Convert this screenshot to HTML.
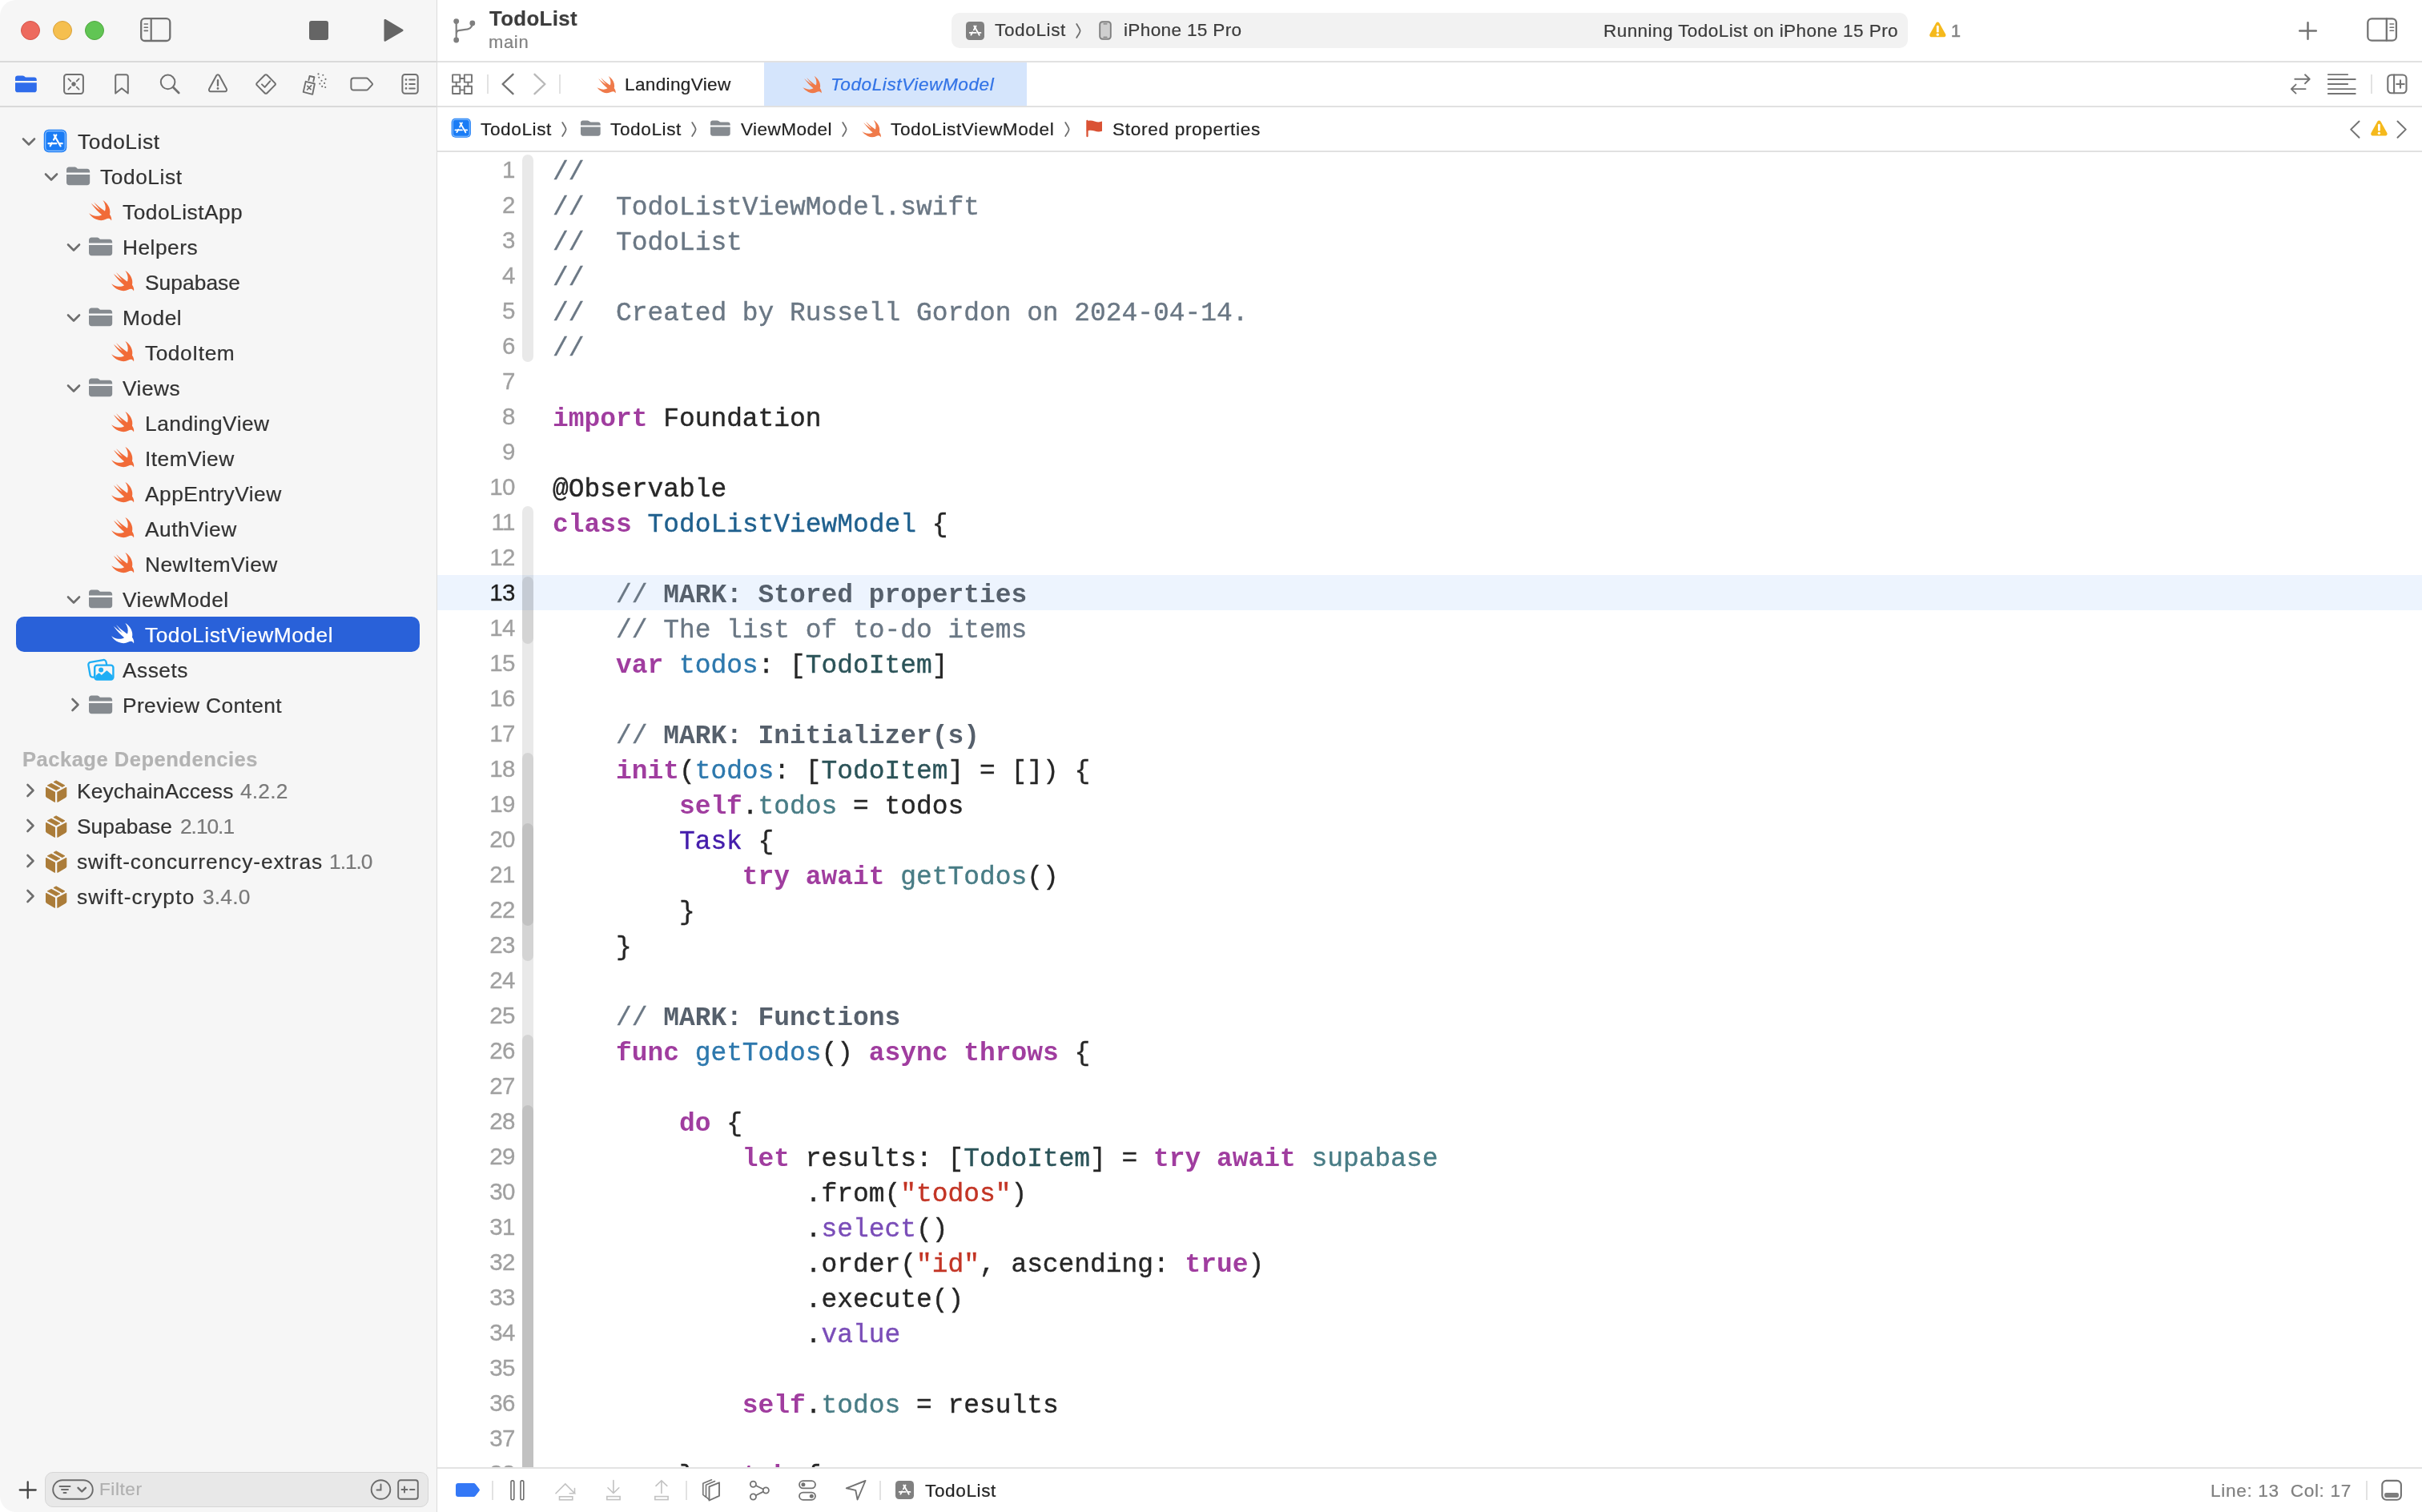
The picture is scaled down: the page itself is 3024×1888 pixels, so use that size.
<!DOCTYPE html>
<html lang="en"><head><meta charset="utf-8"><title>TodoList — TodoListViewModel.swift</title>
<style>
*{box-sizing:border-box;margin:0;padding:0}
html,body{width:3024px;height:1888px;overflow:hidden;background:#fff}
body{font-family:"Liberation Sans",sans-serif;color:#262626;-webkit-font-smoothing:antialiased}
#app{position:relative;width:3024px;height:1888px;overflow:hidden;background:#fff}
.abs,.ic,.t{position:absolute}
.ic{display:block;overflow:visible}
.t{white-space:pre;line-height:44px;height:44px}
/* sidebar */
#sidebar{border-radius:20px 0 0 20px;position:absolute;left:0;top:0;width:546px;height:1888px;background:#f6f6f6;border-right:1px solid #dcdcdc}
#sidebar .hline{background:#d9d9d9}
.hline{position:absolute;height:2px;background:#e1e1e1}
.row{position:absolute;left:0;width:545px;height:44px}
.lbl{position:absolute;font-size:26px;line-height:44px;top:0;color:#2b2b2b;white-space:pre}
.lbl .v{color:#767676}
#sel{position:absolute;left:20px;top:770px;width:504px;height:44px;border-radius:10px;background:#2961d9}
/* editor */
#editor{position:absolute;left:546px;top:0;width:2478px;height:1888px;background:#fff}
.code{position:absolute;left:144px;white-space:pre;font-family:"Liberation Mono",monospace;font-size:32.9px;line-height:44px;height:44px;color:#262626}
.ln{position:absolute;left:0;width:96.500px;text-align:right;font-size:29.5px;letter-spacing:-.8px;line-height:44px;height:44px;color:#a0a0a0}
.k{color:#a03d9f;font-weight:bold}
.c{color:#6a7784}
.m{color:#56606c;font-weight:bold}
.s{color:#c33424}
.td{color:#1f608e}
.od{color:#2d78ad}
.pc{color:#2b5358}
.pf{color:#487c85}
.sc{color:#431cab}
.sf{color:#7a4db8}
.t,.lbl,.code,.ln{will-change:transform}
.code{-webkit-text-stroke:.4px}
.code .k,.code .m{-webkit-text-stroke:0}
.ln{-webkit-text-stroke:.3px}
.t{-webkit-text-stroke:.22px}

</style></head>
<body>
<div id="app">
<div id="sidebar">
<div class="abs" style="left:26px;top:26px;width:24px;height:24px;border-radius:50%;background:#ed6a5e;border:1px solid #d5554a"></div>
<div class="abs" style="left:66px;top:26px;width:24px;height:24px;border-radius:50%;background:#f5bf4f;border:1px solid #d9a13b"></div>
<div class="abs" style="left:106px;top:26px;width:24px;height:24px;border-radius:50%;background:#61c554;border:1px solid #4fa73f"></div>
<svg class="ic" style="left:174.900px;top:21.800px" width="38.500" height="30.200" viewBox="0 0 38.500 30.200" fill="none" stroke="#707070"><rect x="1.200" y="1.200" width="36.100" height="27.800" rx="4.600" stroke-width="2.300"/><path d="M13.700 1.500v27.500" stroke-width="2.200"/><path d="M5.200 8h4.200M5.200 12.200h4.200M5.200 16.400h4.200" stroke-width="1.600" stroke-linecap="round"/></svg>
<div class="abs" style="left:386px;top:26px;width:24px;height:24px;border-radius:3px;background:#656565"></div>
<svg class="ic" style="left:476.500px;top:23px" width="28" height="30" viewBox="0 0 28 30"><path d="M2.500 2.200c0-1 1-1.600 1.900-1.100l21.500 12.600c.9.500.9 1.700 0 2.200L4.400 28.500c-.9.500-1.900-.1-1.900-1.100z" fill="#656565"/></svg>
<div class="hline" style="left:0;top:76px;width:545px"></div>
<div class="hline" style="left:0;top:132px;width:545px"></div>
<svg class="ic" style="left:18.7px;top:94.0px" width="26.8" height="21.8" viewBox="0 0 32 26"><path fill="#2f6ceb" d="M0 4.2C0 1.9 1.4 .5 3.7 .5h7.2c1.2 0 1.9.3 2.7 1l1 .9c.6.5 1.1.7 2 .7h11.7c2.3 0 3.7 1.4 3.7 3.7v1.5H0z"/><path fill="#2f6ceb" d="M0 10.900h32v10.900c0 2.3-1.4 3.7-3.7 3.7H3.7C1.4 25.500 0 24.100 0 21.800z"/></svg>
<svg class="ic" style="left:76.2px;top:88.9px" width="32" height="32" viewBox="0 0 32 32" fill="none" stroke="#707070" stroke-width="2" stroke-linecap="round" stroke-linejoin="round"><rect x="4.100" y="4.100" width="23.800" height="23.800" rx="3.200"/><path d="M9.400 9.400l2.900 2.900M22.600 9.400l-2.900 2.900M9.400 22.600l2.900-2.900M22.600 22.600l-2.900-2.900" stroke-width="1.800"/><circle cx="16" cy="16" r="2.700" fill="#707070" stroke="none"/></svg>
<svg class="ic" style="left:136.1px;top:88.9px" width="32" height="32" viewBox="0 0 32 32" fill="none" stroke="#707070" stroke-width="2" stroke-linecap="round" stroke-linejoin="round"><path d="M8.200 6.400a2.200 2.200 0 0 1 2.200-2.200h11.200a2.200 2.200 0 0 1 2.200 2.200V27.600L16 21.200 8.200 27.600z"/></svg>
<svg class="ic" style="left:195.8px;top:88.9px" width="32" height="32" viewBox="0 0 32 32" fill="none" stroke="#707070" stroke-width="2" stroke-linecap="round" stroke-linejoin="round"><circle cx="13.600" cy="13.400" r="8.800"/><path d="M20.200 20l7 7" stroke-width="2.800"/></svg>
<svg class="ic" style="left:256.0px;top:88.9px" width="32" height="32" viewBox="0 0 32 32" fill="none" stroke="#707070" stroke-width="2" stroke-linecap="round" stroke-linejoin="round"><path d="M16 4.200c.8 0 1.400.4 1.800 1.100l9 16.700c.8 1.500-.2 3.200-1.800 3.200H7c-1.600 0-2.600-1.700-1.800-3.200l9-16.700c.4-.7 1-1.100 1.800-1.100z"/><path d="M16 11.200v6.600" stroke-width="2.300"/><circle cx="16" cy="21.500" r="1.400" fill="#707070" stroke="none"/></svg>
<svg class="ic" style="left:316.0px;top:88.9px" width="32" height="32" viewBox="0 0 32 32" fill="none" stroke="#707070" stroke-width="2" stroke-linecap="round" stroke-linejoin="round"><path d="M14.600 4.800c.8-.8 2-.8 2.800 0l9.800 9.800c.8.8.8 2 0 2.800l-9.800 9.800c-.8.8-2 .8-2.800 0l-9.800-9.800c-.8-.8-.8-2 0-2.800z"/><path d="M11 16.400l3.600 3.500 6.600-7.600"/></svg>
<svg class="ic" style="left:376.5px;top:88.9px" width="32" height="32" viewBox="0 0 32 32" fill="none" stroke="#707070" stroke-width="1.9" stroke-linecap="round" stroke-linejoin="round"><path d="M4.700 12.800l11.200 2.700-2.700 13.300-11.500-2.900z"/><path d="M8.400 11l1.200-5 5.800 1.300-1.100 5.300" /><path d="M6.900 18.300l4.200 4.400M11.600 17.900l-5 5.100" stroke-width="1.700"/><g fill="#707070" stroke="none"><circle cx="21.300" cy="7.700" r="1.050"/><circle cx="26.300" cy="4.700" r="1.050"/><circle cx="29.500" cy="9.900" r="1.050"/><circle cx="24.500" cy="11.800" r="1.050"/><circle cx="28.100" cy="14.900" r="1.050"/><circle cx="25.200" cy="18.900" r="1.050"/><circle cx="29.200" cy="20" r="1.050"/><circle cx="22.300" cy="15.600" r="1.050"/><circle cx="20.500" cy="3.400" r="1.050"/></g></svg>
<svg class="ic" style="left:435.6px;top:88.9px" width="32" height="32" viewBox="0 0 32 32" fill="none" stroke="#707070" stroke-width="2" stroke-linecap="round" stroke-linejoin="round"><path d="M5.400 8.400h15.800c.9 0 1.600.3 2.200 1l5.300 5.800c.5.500.5 1.100 0 1.600l-5.300 5.800c-.6.700-1.300 1-2.200 1H5.400c-1.700 0-3-1.300-3-3V11.400c0-1.700 1.300-3 3-3z"/></svg>
<svg class="ic" style="left:496.0px;top:88.9px" width="32" height="32" viewBox="0 0 32 32" fill="none" stroke="#707070" stroke-width="2" stroke-linecap="round" stroke-linejoin="round"><rect x="6.400" y="4.100" width="19.300" height="23.700" rx="3.200"/><path d="M15.200 10.600h6.600M15.200 16h6.600M15.200 21.400h6.600"/><g fill="#707070" stroke="none"><circle cx="11" cy="10.600" r="1.300"/><circle cx="11" cy="16" r="1.300"/><circle cx="11" cy="21.400" r="1.300"/></g></svg>
<div id="sel"></div>
<svg class="ic" style="left:27px;top:170.8px" width="18" height="12" viewBox="0 0 18 12"><path d="M2 2.5l7 7 7-7" fill="none" stroke="#6e6e6e" stroke-width="2.6" stroke-linecap="round" stroke-linejoin="round"/></svg>
<svg class="ic" style="left:54px;top:161.0px" width="30" height="30" viewBox="0 0 40 40"><rect x="1" y="1" width="38" height="38" rx="8" fill="#1a7cf5"/><rect x="3.6" y="3.600" width="32.8" height="32.8" rx="5.5" fill="none" stroke="#8ec2ff" stroke-width="1.6"/><g stroke="#fff" stroke-width="2.900" stroke-linecap="round" fill="none"><path d="M21.800 10L17.400 18M14.500 23.200L11.600 28.400"/><path d="M18 10l10.800 18.600"/><path d="M8.600 24.200h13.200M27.600 24.200h4"/></g></svg>
<div class="t" style="left:96.50px;top:155px;font-size:26.3px;color:#333333;;letter-spacing:0.581px">TodoList</div>
<svg class="ic" style="left:55.10000000000001px;top:214.8px" width="18" height="12" viewBox="0 0 18 12"><path d="M2 2.5l7 7 7-7" fill="none" stroke="#6e6e6e" stroke-width="2.6" stroke-linecap="round" stroke-linejoin="round"/></svg>
<svg class="ic" style="left:82.9px;top:208.2px" width="29.2" height="23.7" viewBox="0 0 32 26"><path fill="#868b90" d="M0 4.2C0 1.9 1.4 .5 3.7 .5h7.2c1.2 0 1.9.3 2.7 1l1 .9c.6.5 1.1.7 2 .7h11.7c2.3 0 3.7 1.4 3.7 3.7v1.5H0z"/><path fill="#868b90" d="M0 10.900h32v10.900c0 2.3-1.4 3.7-3.7 3.7H3.7C1.4 25.500 0 24.100 0 21.800z"/></svg>
<div class="t" style="left:124.50px;top:199px;font-size:26.3px;color:#333333;;letter-spacing:0.581px">TodoList</div>
<svg class="ic " style="left:111.2px;top:250.4px" width="28.6" height="25.8" viewBox="2.35 3.35 18.4 16.6"><path fill="#f16b38" d="M13.543 3.41c4.114 2.47 6.545 7.162 5.549 11.131-.024.093-.05.181-.076.272l.002.001c2.062 2.538 1.5 5.258 1.236 4.745-1.072-2.086-3.066-1.568-4.088-1.043a6.803 6.803 0 0 1-.281.158l-.02.012-.002.002c-2.115 1.123-4.957 1.205-7.812-.022a12.568 12.568 0 0 1-5.64-4.838c.649.48 1.35.902 2.097 1.252 3.019 1.414 6.051 1.311 8.197-.002C9.651 12.73 7.101 9.67 5.146 7.191a10.628 10.628 0 0 1-1.005-1.384c2.34 2.142 6.038 4.83 7.365 5.576C8.69 8.408 6.208 4.743 6.324 4.86c4.436 4.47 8.528 6.996 8.528 6.996.154.085.27.154.36.213.085-.215.16-.437.224-.668.708-2.588-.09-5.548-1.893-7.992z"/></svg>
<div class="t" style="left:152.50px;top:243px;font-size:26.3px;color:#333333;letter-spacing:.5px">TodoListApp</div>
<svg class="ic" style="left:83.30000000000001px;top:302.8px" width="18" height="12" viewBox="0 0 18 12"><path d="M2 2.5l7 7 7-7" fill="none" stroke="#6e6e6e" stroke-width="2.6" stroke-linecap="round" stroke-linejoin="round"/></svg>
<svg class="ic" style="left:111.10000000000001px;top:296.2px" width="29.2" height="23.7" viewBox="0 0 32 26"><path fill="#868b90" d="M0 4.2C0 1.9 1.4 .5 3.7 .5h7.2c1.2 0 1.9.3 2.7 1l1 .9c.6.5 1.1.7 2 .7h11.7c2.3 0 3.7 1.4 3.7 3.7v1.5H0z"/><path fill="#868b90" d="M0 10.900h32v10.900c0 2.3-1.4 3.7-3.7 3.7H3.7C1.4 25.500 0 24.100 0 21.800z"/></svg>
<div class="t" style="left:152.50px;top:287px;font-size:26.3px;color:#333333;letter-spacing:.5px">Helpers</div>
<svg class="ic " style="left:139.2px;top:338.4px" width="28.6" height="25.8" viewBox="2.35 3.35 18.4 16.6"><path fill="#f16b38" d="M13.543 3.41c4.114 2.47 6.545 7.162 5.549 11.131-.024.093-.05.181-.076.272l.002.001c2.062 2.538 1.5 5.258 1.236 4.745-1.072-2.086-3.066-1.568-4.088-1.043a6.803 6.803 0 0 1-.281.158l-.02.012-.002.002c-2.115 1.123-4.957 1.205-7.812-.022a12.568 12.568 0 0 1-5.64-4.838c.649.48 1.35.902 2.097 1.252 3.019 1.414 6.051 1.311 8.197-.002C9.651 12.73 7.101 9.67 5.146 7.191a10.628 10.628 0 0 1-1.005-1.384c2.34 2.142 6.038 4.83 7.365 5.576C8.69 8.408 6.208 4.743 6.324 4.86c4.436 4.47 8.528 6.996 8.528 6.996.154.085.27.154.36.213.085-.215.16-.437.224-.668.708-2.588-.09-5.548-1.893-7.992z"/></svg>
<div class="t" style="left:180.50px;top:331px;font-size:26.3px;color:#333333;;letter-spacing:0.068px">Supabase</div>
<svg class="ic" style="left:83.30000000000001px;top:390.8px" width="18" height="12" viewBox="0 0 18 12"><path d="M2 2.5l7 7 7-7" fill="none" stroke="#6e6e6e" stroke-width="2.6" stroke-linecap="round" stroke-linejoin="round"/></svg>
<svg class="ic" style="left:111.10000000000001px;top:384.2px" width="29.2" height="23.7" viewBox="0 0 32 26"><path fill="#868b90" d="M0 4.2C0 1.9 1.4 .5 3.7 .5h7.2c1.2 0 1.9.3 2.7 1l1 .9c.6.5 1.1.7 2 .7h11.7c2.3 0 3.7 1.4 3.7 3.7v1.5H0z"/><path fill="#868b90" d="M0 10.900h32v10.900c0 2.3-1.4 3.7-3.7 3.7H3.7C1.4 25.500 0 24.100 0 21.800z"/></svg>
<div class="t" style="left:152.50px;top:375px;font-size:26.3px;color:#333333;letter-spacing:.5px">Model</div>
<svg class="ic " style="left:139.2px;top:426.4px" width="28.6" height="25.8" viewBox="2.35 3.35 18.4 16.6"><path fill="#f16b38" d="M13.543 3.41c4.114 2.47 6.545 7.162 5.549 11.131-.024.093-.05.181-.076.272l.002.001c2.062 2.538 1.5 5.258 1.236 4.745-1.072-2.086-3.066-1.568-4.088-1.043a6.803 6.803 0 0 1-.281.158l-.02.012-.002.002c-2.115 1.123-4.957 1.205-7.812-.022a12.568 12.568 0 0 1-5.64-4.838c.649.48 1.35.902 2.097 1.252 3.019 1.414 6.051 1.311 8.197-.002C9.651 12.73 7.101 9.67 5.146 7.191a10.628 10.628 0 0 1-1.005-1.384c2.34 2.142 6.038 4.83 7.365 5.576C8.69 8.408 6.208 4.743 6.324 4.86c4.436 4.47 8.528 6.996 8.528 6.996.154.085.27.154.36.213.085-.215.16-.437.224-.668.708-2.588-.09-5.548-1.893-7.992z"/></svg>
<div class="t" style="left:180.50px;top:419px;font-size:26.3px;color:#333333;letter-spacing:.5px">TodoItem</div>
<svg class="ic" style="left:83.30000000000001px;top:478.8px" width="18" height="12" viewBox="0 0 18 12"><path d="M2 2.5l7 7 7-7" fill="none" stroke="#6e6e6e" stroke-width="2.6" stroke-linecap="round" stroke-linejoin="round"/></svg>
<svg class="ic" style="left:111.10000000000001px;top:472.2px" width="29.2" height="23.7" viewBox="0 0 32 26"><path fill="#868b90" d="M0 4.2C0 1.9 1.4 .5 3.7 .5h7.2c1.2 0 1.9.3 2.7 1l1 .9c.6.5 1.1.7 2 .7h11.7c2.3 0 3.7 1.4 3.7 3.7v1.5H0z"/><path fill="#868b90" d="M0 10.900h32v10.900c0 2.3-1.4 3.7-3.7 3.7H3.7C1.4 25.500 0 24.100 0 21.800z"/></svg>
<div class="t" style="left:152.50px;top:463px;font-size:26.3px;color:#333333;letter-spacing:.5px">Views</div>
<svg class="ic " style="left:139.2px;top:514.4px" width="28.6" height="25.8" viewBox="2.35 3.35 18.4 16.6"><path fill="#f16b38" d="M13.543 3.41c4.114 2.47 6.545 7.162 5.549 11.131-.024.093-.05.181-.076.272l.002.001c2.062 2.538 1.5 5.258 1.236 4.745-1.072-2.086-3.066-1.568-4.088-1.043a6.803 6.803 0 0 1-.281.158l-.02.012-.002.002c-2.115 1.123-4.957 1.205-7.812-.022a12.568 12.568 0 0 1-5.64-4.838c.649.48 1.35.902 2.097 1.252 3.019 1.414 6.051 1.311 8.197-.002C9.651 12.73 7.101 9.67 5.146 7.191a10.628 10.628 0 0 1-1.005-1.384c2.34 2.142 6.038 4.83 7.365 5.576C8.69 8.408 6.208 4.743 6.324 4.86c4.436 4.47 8.528 6.996 8.528 6.996.154.085.27.154.36.213.085-.215.16-.437.224-.668.708-2.588-.09-5.548-1.893-7.992z"/></svg>
<div class="t" style="left:180.50px;top:507px;font-size:26.3px;color:#333333;letter-spacing:.5px">LandingView</div>
<svg class="ic " style="left:139.2px;top:558.4px" width="28.6" height="25.8" viewBox="2.35 3.35 18.4 16.6"><path fill="#f16b38" d="M13.543 3.41c4.114 2.47 6.545 7.162 5.549 11.131-.024.093-.05.181-.076.272l.002.001c2.062 2.538 1.5 5.258 1.236 4.745-1.072-2.086-3.066-1.568-4.088-1.043a6.803 6.803 0 0 1-.281.158l-.02.012-.002.002c-2.115 1.123-4.957 1.205-7.812-.022a12.568 12.568 0 0 1-5.64-4.838c.649.48 1.35.902 2.097 1.252 3.019 1.414 6.051 1.311 8.197-.002C9.651 12.73 7.101 9.67 5.146 7.191a10.628 10.628 0 0 1-1.005-1.384c2.34 2.142 6.038 4.83 7.365 5.576C8.69 8.408 6.208 4.743 6.324 4.86c4.436 4.47 8.528 6.996 8.528 6.996.154.085.27.154.36.213.085-.215.16-.437.224-.668.708-2.588-.09-5.548-1.893-7.992z"/></svg>
<div class="t" style="left:180.50px;top:551px;font-size:26.3px;color:#333333;letter-spacing:.5px">ItemView</div>
<svg class="ic " style="left:139.2px;top:602.4px" width="28.6" height="25.8" viewBox="2.35 3.35 18.4 16.6"><path fill="#f16b38" d="M13.543 3.41c4.114 2.47 6.545 7.162 5.549 11.131-.024.093-.05.181-.076.272l.002.001c2.062 2.538 1.5 5.258 1.236 4.745-1.072-2.086-3.066-1.568-4.088-1.043a6.803 6.803 0 0 1-.281.158l-.02.012-.002.002c-2.115 1.123-4.957 1.205-7.812-.022a12.568 12.568 0 0 1-5.64-4.838c.649.48 1.35.902 2.097 1.252 3.019 1.414 6.051 1.311 8.197-.002C9.651 12.73 7.101 9.67 5.146 7.191a10.628 10.628 0 0 1-1.005-1.384c2.34 2.142 6.038 4.83 7.365 5.576C8.69 8.408 6.208 4.743 6.324 4.86c4.436 4.47 8.528 6.996 8.528 6.996.154.085.27.154.36.213.085-.215.16-.437.224-.668.708-2.588-.09-5.548-1.893-7.992z"/></svg>
<div class="t" style="left:180.50px;top:595px;font-size:26.3px;color:#333333;letter-spacing:.5px">AppEntryView</div>
<svg class="ic " style="left:139.2px;top:646.4px" width="28.6" height="25.8" viewBox="2.35 3.35 18.4 16.6"><path fill="#f16b38" d="M13.543 3.41c4.114 2.47 6.545 7.162 5.549 11.131-.024.093-.05.181-.076.272l.002.001c2.062 2.538 1.5 5.258 1.236 4.745-1.072-2.086-3.066-1.568-4.088-1.043a6.803 6.803 0 0 1-.281.158l-.02.012-.002.002c-2.115 1.123-4.957 1.205-7.812-.022a12.568 12.568 0 0 1-5.64-4.838c.649.48 1.35.902 2.097 1.252 3.019 1.414 6.051 1.311 8.197-.002C9.651 12.73 7.101 9.67 5.146 7.191a10.628 10.628 0 0 1-1.005-1.384c2.34 2.142 6.038 4.83 7.365 5.576C8.69 8.408 6.208 4.743 6.324 4.86c4.436 4.47 8.528 6.996 8.528 6.996.154.085.27.154.36.213.085-.215.16-.437.224-.668.708-2.588-.09-5.548-1.893-7.992z"/></svg>
<div class="t" style="left:180.50px;top:639px;font-size:26.3px;color:#333333;letter-spacing:.5px">AuthView</div>
<svg class="ic " style="left:139.2px;top:690.4px" width="28.6" height="25.8" viewBox="2.35 3.35 18.4 16.6"><path fill="#f16b38" d="M13.543 3.41c4.114 2.47 6.545 7.162 5.549 11.131-.024.093-.05.181-.076.272l.002.001c2.062 2.538 1.5 5.258 1.236 4.745-1.072-2.086-3.066-1.568-4.088-1.043a6.803 6.803 0 0 1-.281.158l-.02.012-.002.002c-2.115 1.123-4.957 1.205-7.812-.022a12.568 12.568 0 0 1-5.64-4.838c.649.48 1.35.902 2.097 1.252 3.019 1.414 6.051 1.311 8.197-.002C9.651 12.73 7.101 9.67 5.146 7.191a10.628 10.628 0 0 1-1.005-1.384c2.34 2.142 6.038 4.83 7.365 5.576C8.69 8.408 6.208 4.743 6.324 4.86c4.436 4.47 8.528 6.996 8.528 6.996.154.085.27.154.36.213.085-.215.16-.437.224-.668.708-2.588-.09-5.548-1.893-7.992z"/></svg>
<div class="t" style="left:180.50px;top:683px;font-size:26.3px;color:#333333;letter-spacing:.5px">NewItemView</div>
<svg class="ic" style="left:83.30000000000001px;top:742.8px" width="18" height="12" viewBox="0 0 18 12"><path d="M2 2.5l7 7 7-7" fill="none" stroke="#6e6e6e" stroke-width="2.6" stroke-linecap="round" stroke-linejoin="round"/></svg>
<svg class="ic" style="left:111.10000000000001px;top:736.2px" width="29.2" height="23.7" viewBox="0 0 32 26"><path fill="#868b90" d="M0 4.2C0 1.9 1.4 .5 3.7 .5h7.2c1.2 0 1.9.3 2.7 1l1 .9c.6.5 1.1.7 2 .7h11.7c2.3 0 3.7 1.4 3.7 3.7v1.5H0z"/><path fill="#868b90" d="M0 10.900h32v10.900c0 2.3-1.4 3.7-3.7 3.7H3.7C1.4 25.500 0 24.100 0 21.800z"/></svg>
<div class="t" style="left:152.50px;top:727px;font-size:26.3px;color:#333333;letter-spacing:.5px">ViewModel</div>
<svg class="ic " style="left:139.2px;top:778.4px" width="28.6" height="25.8" viewBox="2.35 3.35 18.4 16.6"><path fill="#ffffff" d="M13.543 3.41c4.114 2.47 6.545 7.162 5.549 11.131-.024.093-.05.181-.076.272l.002.001c2.062 2.538 1.5 5.258 1.236 4.745-1.072-2.086-3.066-1.568-4.088-1.043a6.803 6.803 0 0 1-.281.158l-.02.012-.002.002c-2.115 1.123-4.957 1.205-7.812-.022a12.568 12.568 0 0 1-5.64-4.838c.649.48 1.35.902 2.097 1.252 3.019 1.414 6.051 1.311 8.197-.002C9.651 12.73 7.101 9.67 5.146 7.191a10.628 10.628 0 0 1-1.005-1.384c2.34 2.142 6.038 4.83 7.365 5.576C8.69 8.408 6.208 4.743 6.324 4.86c4.436 4.47 8.528 6.996 8.528 6.996.154.085.27.154.36.213.085-.215.16-.437.224-.668.708-2.588-.09-5.548-1.893-7.992z"/></svg>
<div class="t" style="left:180.50px;top:771px;font-size:26.3px;color:#fff;;letter-spacing:0.524px">TodoListViewModel</div>
<svg class="ic" style="left:108.6px;top:821.6px" width="34" height="28" viewBox="0 0 34 28"><rect x="2.300" y="3.300" width="22.500" height="19" rx="3.200" fill="none" stroke="#1eaef5" stroke-width="2.300" transform="rotate(-10 13.500 12.800)"/><rect x="9.200" y="8.600" width="23.200" height="18" rx="3" fill="#f6f6f6" stroke="#1eaef5" stroke-width="2.400"/><circle cx="17.100" cy="14.600" r="3" fill="#1eaef5"/><path d="M10.400 21.800l3.300-3c.6-.5 1.200-.5 1.800 0l2.300 2.100 5.500-5c.7-.6 1.400-.6 2.100 0l6.200 5.700v4.500h-21.200z" fill="#1eaef5"/></svg>
<div class="t" style="left:152.50px;top:815px;font-size:26.3px;color:#333333;letter-spacing:.5px">Assets</div>
<svg class="ic" style="left:88.20000000000002px;top:871.4px" width="12" height="18" viewBox="0 0 12 18"><path d="M2.5 2l7 7-7 7" fill="none" stroke="#6e6e6e" stroke-width="2.6" stroke-linecap="round" stroke-linejoin="round"/></svg>
<svg class="ic" style="left:111.10000000000001px;top:868.2px" width="29.2" height="23.7" viewBox="0 0 32 26"><path fill="#868b90" d="M0 4.2C0 1.9 1.4 .5 3.7 .5h7.2c1.2 0 1.9.3 2.7 1l1 .9c.6.5 1.1.7 2 .7h11.7c2.3 0 3.7 1.4 3.7 3.7v1.5H0z"/><path fill="#868b90" d="M0 10.900h32v10.900c0 2.3-1.4 3.7-3.7 3.7H3.7C1.4 25.500 0 24.100 0 21.800z"/></svg>
<div class="t" style="left:152.50px;top:859px;font-size:26.3px;color:#333333;;letter-spacing:0.403px">Preview Content</div>
<div class="t" style="left:27.80px;top:926px;font-size:25.5px;color:#b3b3b3;font-weight:bold;letter-spacing:0.526px">Package Dependencies</div>
<svg class="ic" style="left:32px;top:978.4px" width="12" height="18" viewBox="0 0 12 18"><path d="M2.5 2l7 7-7 7" fill="none" stroke="#6e6e6e" stroke-width="2.6" stroke-linecap="round" stroke-linejoin="round"/></svg>
<svg class="ic" style="left:56.9px;top:973.8px" width="26.300" height="28.300" viewBox="0 0 26.300 28.300" fill="#ab7c39" stroke="#ab7c39" stroke-width="1.200" stroke-linejoin="round"><path stroke-width=".8" d="M13.100 .800L9.900 2.600 20.700 8.700 23.900 6.800z"/><path stroke-width=".8" d="M7.100 4.300L2.200 6.800l10.900 5.800 4.800-2.500z"/><path d="M.600 9.500l10.800 5.800v11.900L1.700 21.500c-.7-.4-1.100-1-1.100-1.800z"/><path d="M25.700 9.500l-10.800 5.800v11.900l9.700-5.700c.7-.4 1.100-1 1.100-1.800z"/></svg>
<div class="t" style="left:96.00px;top:966px;font-size:26.3px;color:#333333;;letter-spacing:0.182px">KeychainAccess</div>
<div class="t" style="left:300.40px;top:966px;font-size:26.3px;color:#7a7a7a;;letter-spacing:0.200px">4.2.2</div>
<svg class="ic" style="left:32px;top:1022.4000000000001px" width="12" height="18" viewBox="0 0 12 18"><path d="M2.5 2l7 7-7 7" fill="none" stroke="#6e6e6e" stroke-width="2.6" stroke-linecap="round" stroke-linejoin="round"/></svg>
<svg class="ic" style="left:56.9px;top:1017.8px" width="26.300" height="28.300" viewBox="0 0 26.300 28.300" fill="#ab7c39" stroke="#ab7c39" stroke-width="1.200" stroke-linejoin="round"><path stroke-width=".8" d="M13.100 .800L9.900 2.600 20.700 8.700 23.900 6.800z"/><path stroke-width=".8" d="M7.100 4.300L2.200 6.800l10.900 5.800 4.800-2.500z"/><path d="M.600 9.500l10.800 5.800v11.900L1.700 21.500c-.7-.4-1.100-1-1.100-1.800z"/><path d="M25.700 9.500l-10.800 5.800v11.900l9.700-5.700c.7-.4 1.100-1 1.100-1.800z"/></svg>
<div class="t" style="left:96.00px;top:1010px;font-size:26.3px;color:#333333;;letter-spacing:0.068px">Supabase</div>
<div class="t" style="left:224.50px;top:1010px;font-size:26.3px;color:#7a7a7a;;letter-spacing:-1.021px">2.10.1</div>
<svg class="ic" style="left:32px;top:1066.4px" width="12" height="18" viewBox="0 0 12 18"><path d="M2.5 2l7 7-7 7" fill="none" stroke="#6e6e6e" stroke-width="2.6" stroke-linecap="round" stroke-linejoin="round"/></svg>
<svg class="ic" style="left:56.9px;top:1061.8px" width="26.300" height="28.300" viewBox="0 0 26.300 28.300" fill="#ab7c39" stroke="#ab7c39" stroke-width="1.200" stroke-linejoin="round"><path stroke-width=".8" d="M13.100 .800L9.900 2.600 20.700 8.700 23.900 6.800z"/><path stroke-width=".8" d="M7.100 4.300L2.200 6.800l10.900 5.800 4.800-2.500z"/><path d="M.600 9.500l10.800 5.800v11.900L1.700 21.500c-.7-.4-1.100-1-1.100-1.800z"/><path d="M25.700 9.500l-10.800 5.800v11.900l9.700-5.700c.7-.4 1.100-1 1.100-1.800z"/></svg>
<div class="t" style="left:96.00px;top:1054px;font-size:26.3px;color:#333333;;letter-spacing:0.919px">swift-concurrency-extras</div>
<div class="t" style="left:410.50px;top:1054px;font-size:26.3px;color:#7a7a7a;;letter-spacing:-1.000px">1.1.0</div>
<svg class="ic" style="left:32px;top:1110.4px" width="12" height="18" viewBox="0 0 12 18"><path d="M2.5 2l7 7-7 7" fill="none" stroke="#6e6e6e" stroke-width="2.6" stroke-linecap="round" stroke-linejoin="round"/></svg>
<svg class="ic" style="left:56.9px;top:1105.8px" width="26.300" height="28.300" viewBox="0 0 26.300 28.300" fill="#ab7c39" stroke="#ab7c39" stroke-width="1.200" stroke-linejoin="round"><path stroke-width=".8" d="M13.100 .800L9.900 2.600 20.700 8.700 23.900 6.800z"/><path stroke-width=".8" d="M7.100 4.300L2.200 6.800l10.900 5.800 4.800-2.500z"/><path d="M.600 9.500l10.800 5.800v11.900L1.700 21.500c-.7-.4-1.100-1-1.100-1.800z"/><path d="M25.700 9.500l-10.800 5.800v11.900l9.700-5.700c.7-.4 1.100-1 1.100-1.800z"/></svg>
<div class="t" style="left:96.00px;top:1098px;font-size:26.3px;color:#333333;;letter-spacing:1.211px">swift-crypto</div>
<div class="t" style="left:253.00px;top:1098px;font-size:26.3px;color:#7a7a7a;;letter-spacing:0.200px">3.4.0</div>
<svg class="ic" style="left:23px;top:1849px" width="23" height="23" viewBox="0 0 23 23"><path d="M11.700 1.500v20M1.700 11.500h20" stroke="#444" stroke-width="2.300" stroke-linecap="round"/></svg>
<div class="abs" style="left:56px;top:1838px;width:478.500px;height:44px;border-radius:10px;background:#e8e8e8;border:1.500px solid #d6d6d6"></div>
<svg class="ic" style="left:65px;top:1846.500px" width="52" height="26" viewBox="0 0 52 26" fill="none" stroke="#6b6b6b" stroke-width="1.900" stroke-linecap="round" stroke-linejoin="round"><rect x="1.200" y="1.200" width="49.600" height="23.600" rx="11.800"/><path d="M9.500 9h13M12 13h8M14.500 17h3"/><path d="M32.500 10.800l4.700 4.700 4.700-4.700" stroke-width="2.400"/></svg>
<div class="t" style="left:124.30px;top:1838px;font-size:22.6px;color:#b0b0b0;;letter-spacing:0.547px">Filter</div>
<svg class="ic" style="left:461.500px;top:1846.500px" width="27" height="26" viewBox="0 0 27 26" fill="none" stroke="#6b6b6b" stroke-width="1.900" stroke-linecap="round"><circle cx="13.500" cy="13" r="11.800"/><path d="M13.500 6.500v7H8.500"/></svg>
<svg class="ic" style="left:495.500px;top:1846.500px" width="27" height="26" viewBox="0 0 27 26" fill="none" stroke="#6b6b6b" stroke-width="1.900" stroke-linecap="round"><rect x="1.200" y="1.200" width="24.600" height="23.600" rx="3"/><path d="M5.500 13h7M9 9.500v7M16 13h5.500"/></svg>
</div>
<div id="editor">
<div class="abs" style="left:0;top:718px;width:2478px;height:44px;background:#edf4fe"></div>
<div class="abs" style="left:106px;top:193px;width:14px;height:259px;background:rgba(0,0,0,.088);border-radius:7px 7px 7px 7px"></div>
<div class="abs" style="left:106px;top:632px;width:14px;height:1268px;background:rgba(0,0,0,.088);border-radius:7px 7px 0px 0px"></div>
<div class="abs" style="left:106px;top:720px;width:14px;height:84px;background:rgba(0,0,0,.088);border-radius:7px 7px 7px 7px"></div>
<div class="abs" style="left:106px;top:940px;width:14px;height:260px;background:rgba(0,0,0,.088);border-radius:7px 7px 7px 7px"></div>
<div class="abs" style="left:106px;top:1028px;width:14px;height:128px;background:rgba(0,0,0,.088);border-radius:7px 7px 7px 7px"></div>
<div class="abs" style="left:106px;top:1292px;width:14px;height:608px;background:rgba(0,0,0,.088);border-radius:7px 7px 0px 0px"></div>
<div class="abs" style="left:106px;top:1380px;width:14px;height:520px;background:rgba(0,0,0,.088);border-radius:7px 7px 0px 0px"></div>
<div class="ln" style="top:190px">1</div><div class="code" style="top:194px"><span class="c">//</span></div>
<div class="ln" style="top:234px">2</div><div class="code" style="top:238px"><span class="c">//  TodoListViewModel.swift</span></div>
<div class="ln" style="top:278px">3</div><div class="code" style="top:282px"><span class="c">//  TodoList</span></div>
<div class="ln" style="top:322px">4</div><div class="code" style="top:326px"><span class="c">//</span></div>
<div class="ln" style="top:366px">5</div><div class="code" style="top:370px"><span class="c">//  Created by Russell Gordon on 2024-04-14.</span></div>
<div class="ln" style="top:410px">6</div><div class="code" style="top:414px"><span class="c">//</span></div>
<div class="ln" style="top:454px">7</div><div class="code" style="top:458px"></div>
<div class="ln" style="top:498px">8</div><div class="code" style="top:502px"><span class="k">import</span> Foundation</div>
<div class="ln" style="top:542px">9</div><div class="code" style="top:546px"></div>
<div class="ln" style="top:586px">10</div><div class="code" style="top:590px">@Observable</div>
<div class="ln" style="top:630px">11</div><div class="code" style="top:634px"><span class="k">class</span> <span class="td">TodoListViewModel</span> {</div>
<div class="ln" style="top:674px">12</div><div class="code" style="top:678px"></div>
<div class="ln" style="top:718px;color:#1f1f1f">13</div><div class="code" style="top:722px">    <span class="c">// </span><span class="m">MARK: Stored properties</span></div>
<div class="ln" style="top:762px">14</div><div class="code" style="top:766px">    <span class="c">// The list of to-do items</span></div>
<div class="ln" style="top:806px">15</div><div class="code" style="top:810px">    <span class="k">var</span> <span class="od">todos</span>: [<span class="pc">TodoItem</span>]</div>
<div class="ln" style="top:850px">16</div><div class="code" style="top:854px"></div>
<div class="ln" style="top:894px">17</div><div class="code" style="top:898px">    <span class="c">// </span><span class="m">MARK: Initializer(s)</span></div>
<div class="ln" style="top:938px">18</div><div class="code" style="top:942px">    <span class="k">init</span>(<span class="od">todos</span>: [<span class="pc">TodoItem</span>] = []) {</div>
<div class="ln" style="top:982px">19</div><div class="code" style="top:986px">        <span class="k">self</span>.<span class="pf">todos</span> = todos</div>
<div class="ln" style="top:1026px">20</div><div class="code" style="top:1030px">        <span class="sc">Task</span> {</div>
<div class="ln" style="top:1070px">21</div><div class="code" style="top:1074px">            <span class="k">try</span> <span class="k">await</span> <span class="pf">getTodos</span>()</div>
<div class="ln" style="top:1114px">22</div><div class="code" style="top:1118px">        }</div>
<div class="ln" style="top:1158px">23</div><div class="code" style="top:1162px">    }</div>
<div class="ln" style="top:1202px">24</div><div class="code" style="top:1206px"></div>
<div class="ln" style="top:1246px">25</div><div class="code" style="top:1250px">    <span class="c">// </span><span class="m">MARK: Functions</span></div>
<div class="ln" style="top:1290px">26</div><div class="code" style="top:1294px">    <span class="k">func</span> <span class="od">getTodos</span>() <span class="k">async</span> <span class="k">throws</span> {</div>
<div class="ln" style="top:1334px">27</div><div class="code" style="top:1338px"></div>
<div class="ln" style="top:1378px">28</div><div class="code" style="top:1382px">        <span class="k">do</span> {</div>
<div class="ln" style="top:1422px">29</div><div class="code" style="top:1426px">            <span class="k">let</span> results: [<span class="pc">TodoItem</span>] = <span class="k">try</span> <span class="k">await</span> <span class="pf">supabase</span></div>
<div class="ln" style="top:1466px">30</div><div class="code" style="top:1470px">                .from(<span class="s">&quot;todos&quot;</span>)</div>
<div class="ln" style="top:1510px">31</div><div class="code" style="top:1514px">                .<span class="sf">select</span>()</div>
<div class="ln" style="top:1554px">32</div><div class="code" style="top:1558px">                .order(<span class="s">&quot;id&quot;</span>, ascending: <span class="k">true</span>)</div>
<div class="ln" style="top:1598px">33</div><div class="code" style="top:1602px">                .execute()</div>
<div class="ln" style="top:1642px">34</div><div class="code" style="top:1646px">                .<span class="sf">value</span></div>
<div class="ln" style="top:1686px">35</div><div class="code" style="top:1690px"></div>
<div class="ln" style="top:1730px">36</div><div class="code" style="top:1734px">            <span class="k">self</span>.<span class="pf">todos</span> = results</div>
<div class="ln" style="top:1774px">37</div><div class="code" style="top:1778px"></div>
<div class="ln" style="top:1818px">38</div><div class="code" style="top:1822px">        } <span class="k">catch</span> {</div>
<svg class="ic" style="left:18px;top:21px" width="30" height="34" viewBox="0 0 30 34" fill="none" stroke="#7f7f7f" stroke-width="2.2" stroke-linecap="round" stroke-linejoin="round" ><circle cx="5.700" cy="5.600" r="3.400" fill="#7f7f7f" stroke="none"/><circle cx="5.700" cy="29" r="3.400" fill="#7f7f7f" stroke="none"/><circle cx="25.800" cy="7.900" r="3.400" fill="#7f7f7f" stroke="none"/><path d="M5.700 6v23M5.700 21.500c0-5 4-4.800 9.500-5.300s10.600-1.700 10.600-8"/></svg>
<div class="t" style="left:64.70px;top:1px;font-size:25.8px;color:#3d3d3d;font-weight:bold;letter-spacing:0.377px">TodoList</div>
<div class="t" style="left:63.80px;top:31px;font-size:22px;color:#828282;;letter-spacing:0.653px">main</div>
<div class="abs" style="left:642px;top:16px;width:1193.500px;height:44px;border-radius:10px;background:#f2f2f2"></div>
<svg class="ic" style="left:660px;top:26.6px" width="23" height="23" viewBox="0 0 24 24"><rect x="0" y="0" width="24" height="24" rx="4.800" fill="#808080"/><g stroke="#fff" stroke-width="2" stroke-linecap="round" fill="none"><path d="M13.100 5.800L10.300 10.800M8.600 13.800L6.700 17.300"/><path d="M10.700 5.800l6.800 11.700"/><path d="M5 14.500h8.200M16.600 14.500h2.600"/></g></svg>
<div class="t" style="left:696.30px;top:16px;font-size:22.6px;color:#3c3c3c;;letter-spacing:0.605px">TodoList</div>
<svg class="ic" style="left:796.5px;top:28.9px" width="7" height="19" viewBox="0 0 7 19"><path d="M1.200 1C4 5.500 5.600 7.500 5.600 9.500S4 13.500 1.200 18" fill="none" stroke="#6f6f6f" stroke-width="1.800" stroke-linecap="round"/></svg>
<svg class="ic" style="left:826px;top:26px" width="16" height="24" viewBox="0 0 16 24" fill="none" stroke="#7f7f7f" stroke-width="1.9" stroke-linecap="round" stroke-linejoin="round" ><rect x="1.200" y="1.200" width="13.600" height="21.600" rx="3.200" fill="#cfcfcf"/><path d="M6 3.800h4M6 20.400h4" stroke-width="1.200"/></svg>
<div class="t" style="left:857.40px;top:16px;font-size:22.6px;color:#3c3c3c;;letter-spacing:0.331px">iPhone 15 Pro</div>
<div class="t" style="right:654.40px;top:17px;font-size:22.6px;color:#3c3c3c;;letter-spacing:0.392px">Running TodoList on iPhone 15 Pro</div>
<svg class="ic" style="left:1863.4px;top:27.3px" width="20.6" height="20.6" viewBox="0 0 24 24"><path d="M12 .600c1 0 1.800.500 2.400 1.500l9.100 16.400c1 1.900-.2 4-2.300 4H2.800c-2.100 0-3.300-2.100-2.300-4L9.600 2.100C10.200 1.100 11 .600 12 .600z" fill="#f5b91c"/><path d="M12 7.200v7" stroke="#fff" stroke-width="3.300" stroke-linecap="round"/><circle cx="12" cy="18.800" r="1.900" fill="#fff"/></svg>
<div class="t" style="left:1890.00px;top:17px;font-size:21.5px;color:#858585;-webkit-text-stroke:.6px">1</div>
<svg class="ic" style="left:2323.3px;top:25.5px" width="25" height="25" viewBox="0 0 25 25" fill="none" stroke="#737373" stroke-width="2.5" stroke-linecap="round" stroke-linejoin="round" ><path d="M12.500 2.200v20.600M2.200 12.500h20.600"/></svg>
<svg class="ic" style="left:2408px;top:21px" width="40" height="32" viewBox="0 0 40 32" fill="none" stroke="#737373" stroke-width="2.3" stroke-linecap="round" stroke-linejoin="round" ><rect x="2.300" y="2.300" width="35.600" height="27.400" rx="5"/><path d="M25.800 2.500v27"/><path d="M30 9h4.600M30 13.200h4.600M30 17.300h4.600" stroke-width="1.500"/></svg>
<div class="hline" style="left:0;top:76px;width:2478px"></div>
<svg class="ic" style="left:17px;top:91px" width="28" height="28" viewBox="0 0 28 28" fill="none" stroke="#737373" stroke-width="1.9" stroke-linecap="round" stroke-linejoin="round" stroke-linejoin="miter" stroke-linecap="butt"><rect x="2.100" y="2.400" width="9.200" height="9.200"/><rect x="16.800" y="2.400" width="9.200" height="9.200"/><rect x="2.100" y="16.800" width="9.200" height="9.200"/><rect x="16.800" y="16.800" width="9.200" height="9.200"/><path d="M11.300 7h5.500M11.300 21.400h5.500M6.700 11.600v5.200M21.400 11.600v5.200"/></svg>
<div class="abs" style="left:62px;top:93px;width:2px;height:24px;background:#e2e2e2"></div>
<svg class="ic" style="left:78px;top:90px" width="20" height="30" viewBox="0 0 20 30" fill="none" stroke="#737373" stroke-width="2.4" stroke-linecap="round" stroke-linejoin="round" ><path d="M16.500 2.800L3.600 15l12.900 12.200"/></svg>
<svg class="ic" style="left:118px;top:90px" width="20" height="30" viewBox="0 0 20 30" fill="none" stroke="#b9b9b9" stroke-width="2.4" stroke-linecap="round" stroke-linejoin="round" ><path d="M3.500 2.800L16.400 15 3.500 27.200"/></svg>
<div class="abs" style="left:152px;top:93px;width:2px;height:24px;background:#e2e2e2"></div>
<svg class="ic " style="left:199.4px;top:94.7px" width="24" height="21.7" viewBox="2.35 3.35 18.4 16.6"><path fill="#ef7a4a" d="M13.543 3.41c4.114 2.47 6.545 7.162 5.549 11.131-.024.093-.05.181-.076.272l.002.001c2.062 2.538 1.5 5.258 1.236 4.745-1.072-2.086-3.066-1.568-4.088-1.043a6.803 6.803 0 0 1-.281.158l-.02.012-.002.002c-2.115 1.123-4.957 1.205-7.812-.022a12.568 12.568 0 0 1-5.64-4.838c.649.48 1.35.902 2.097 1.252 3.019 1.414 6.051 1.311 8.197-.002C9.651 12.73 7.101 9.67 5.146 7.191a10.628 10.628 0 0 1-1.005-1.384c2.34 2.142 6.038 4.83 7.365 5.576C8.69 8.408 6.208 4.743 6.324 4.86c4.436 4.47 8.528 6.996 8.528 6.996.154.085.27.154.36.213.085-.215.16-.437.224-.668.708-2.588-.09-5.548-1.893-7.992z"/></svg>
<div class="t" style="left:234.30px;top:84px;font-size:22.6px;color:#242424;;letter-spacing:0.329px">LandingView</div>
<div class="abs" style="left:408px;top:78px;width:328px;height:54px;background:#d5e5fc"></div>
<svg class="ic " style="left:455.7px;top:94.7px" width="24" height="21.7" viewBox="2.35 3.35 18.4 16.6"><path fill="#ef7a4a" d="M13.543 3.41c4.114 2.47 6.545 7.162 5.549 11.131-.024.093-.05.181-.076.272l.002.001c2.062 2.538 1.5 5.258 1.236 4.745-1.072-2.086-3.066-1.568-4.088-1.043a6.803 6.803 0 0 1-.281.158l-.02.012-.002.002c-2.115 1.123-4.957 1.205-7.812-.022a12.568 12.568 0 0 1-5.64-4.838c.649.48 1.35.902 2.097 1.252 3.019 1.414 6.051 1.311 8.197-.002C9.651 12.73 7.101 9.67 5.146 7.191a10.628 10.628 0 0 1-1.005-1.384c2.34 2.142 6.038 4.83 7.365 5.576C8.69 8.408 6.208 4.743 6.324 4.86c4.436 4.47 8.528 6.996 8.528 6.996.154.085.27.154.36.213.085-.215.16-.437.224-.668.708-2.588-.09-5.548-1.893-7.992z"/></svg>
<div class="t" style="left:490.60px;top:84px;font-size:22.6px;color:#3273e6;font-style:italic;letter-spacing:0.565px">TodoListViewModel</div>
<svg class="ic" style="left:2312px;top:91px" width="28" height="28" viewBox="0 0 28 28" fill="none" stroke="#737373" stroke-width="1.9" stroke-linecap="round" stroke-linejoin="round" ><path d="M7.300 7.800h18.400M20 2.300l5.700 5.500-5.700 5.500M20.600 20.100H2.800M8.500 14.600l-5.700 5.500 5.700 5.500"/></svg>
<svg class="ic" style="left:2359px;top:91px" width="38" height="28" viewBox="0 0 38 28" fill="none" stroke="#737373" stroke-width="1.8" stroke-linecap="round" stroke-linejoin="round" stroke-linecap="butt"><path d="M1.800 2.100h24.400M1.800 8h34M1.800 14h24.400M1.800 20.100h34M1.800 26h34"/></svg>
<div class="abs" style="left:2414px;top:93px;width:2px;height:24px;background:#e2e2e2"></div>
<svg class="ic" style="left:2433px;top:91px" width="28" height="28" viewBox="0 0 28 28" fill="none" stroke="#737373" stroke-width="2.1" stroke-linecap="round" stroke-linejoin="round" ><rect x="2.300" y="2.500" width="23.200" height="22.800" rx="4.500"/><path d="M10.100 2.500v22.800M13.300 14h9.400M18 9.300v9.400"/></svg>
<div class="hline" style="left:0;top:132px;width:2478px"></div>
<svg class="ic" style="left:17px;top:147.45px" width="25.5" height="25.5" viewBox="0 0 40 40"><rect x="1" y="1" width="38" height="38" rx="8" fill="#1a7cf5"/><rect x="3.6" y="3.600" width="32.8" height="32.8" rx="5.5" fill="none" stroke="#8ec2ff" stroke-width="1.6"/><g stroke="#fff" stroke-width="2.900" stroke-linecap="round" fill="none"><path d="M21.800 10L17.400 18M14.500 23.200L11.600 28.400"/><path d="M18 10l10.800 18.600"/><path d="M8.600 24.200h13.200M27.600 24.200h4"/></g></svg>
<div class="t" style="left:54.40px;top:140px;font-size:22.6px;color:#242424;;letter-spacing:0.605px">TodoList</div>
<svg class="ic" style="left:154.5px;top:152.0px" width="7" height="19" viewBox="0 0 7 19"><path d="M1.200 1C4 5.500 5.600 7.500 5.600 9.500S4 13.500 1.200 18" fill="none" stroke="#6f6f6f" stroke-width="1.800" stroke-linecap="round"/></svg>
<svg class="ic" style="left:179.3px;top:150.1px" width="24.7" height="20.1" viewBox="0 0 32 26"><path fill="#868b90" d="M0 4.2C0 1.9 1.4 .5 3.7 .5h7.2c1.2 0 1.9.3 2.7 1l1 .9c.6.5 1.1.7 2 .7h11.7c2.3 0 3.7 1.4 3.7 3.7v1.5H0z"/><path fill="#868b90" d="M0 10.900h32v10.900c0 2.3-1.4 3.7-3.7 3.7H3.7C1.4 25.500 0 24.100 0 21.800z"/></svg>
<div class="t" style="left:216.30px;top:140px;font-size:22.6px;color:#242424;;letter-spacing:0.605px">TodoList</div>
<svg class="ic" style="left:316.8px;top:152.0px" width="7" height="19" viewBox="0 0 7 19"><path d="M1.200 1C4 5.500 5.600 7.500 5.600 9.500S4 13.500 1.200 18" fill="none" stroke="#6f6f6f" stroke-width="1.800" stroke-linecap="round"/></svg>
<svg class="ic" style="left:341.2px;top:150.1px" width="24.7" height="20.1" viewBox="0 0 32 26"><path fill="#868b90" d="M0 4.2C0 1.9 1.4 .5 3.7 .5h7.2c1.2 0 1.9.3 2.7 1l1 .9c.6.5 1.1.7 2 .7h11.7c2.3 0 3.7 1.4 3.7 3.7v1.5H0z"/><path fill="#868b90" d="M0 10.900h32v10.900c0 2.3-1.4 3.7-3.7 3.7H3.7C1.4 25.500 0 24.100 0 21.800z"/></svg>
<div class="t" style="left:378.60px;top:140px;font-size:22.6px;color:#242424;;letter-spacing:0.432px">ViewModel</div>
<svg class="ic" style="left:504.8px;top:152.0px" width="7" height="19" viewBox="0 0 7 19"><path d="M1.200 1C4 5.500 5.600 7.500 5.600 9.500S4 13.500 1.200 18" fill="none" stroke="#6f6f6f" stroke-width="1.800" stroke-linecap="round"/></svg>
<svg class="ic " style="left:530px;top:149.6px" width="24.2" height="21.8" viewBox="2.35 3.35 18.4 16.6"><path fill="#ef7a4a" d="M13.543 3.41c4.114 2.47 6.545 7.162 5.549 11.131-.024.093-.05.181-.076.272l.002.001c2.062 2.538 1.5 5.258 1.236 4.745-1.072-2.086-3.066-1.568-4.088-1.043a6.803 6.803 0 0 1-.281.158l-.02.012-.002.002c-2.115 1.123-4.957 1.205-7.812-.022a12.568 12.568 0 0 1-5.64-4.838c.649.48 1.35.902 2.097 1.252 3.019 1.414 6.051 1.311 8.197-.002C9.651 12.73 7.101 9.67 5.146 7.191a10.628 10.628 0 0 1-1.005-1.384c2.34 2.142 6.038 4.83 7.365 5.576C8.69 8.408 6.208 4.743 6.324 4.86c4.436 4.47 8.528 6.996 8.528 6.996.154.085.27.154.36.213.085-.215.16-.437.224-.668.708-2.588-.09-5.548-1.893-7.992z"/></svg>
<div class="t" style="left:566.10px;top:140px;font-size:22.6px;color:#242424;;letter-spacing:0.590px">TodoListViewModel</div>
<svg class="ic" style="left:782.6px;top:152.0px" width="7" height="19" viewBox="0 0 7 19"><path d="M1.200 1C4 5.500 5.600 7.500 5.600 9.500S4 13.500 1.200 18" fill="none" stroke="#6f6f6f" stroke-width="1.800" stroke-linecap="round"/></svg>
<svg class="ic" style="left:809.5px;top:149.0px" width="22" height="22" viewBox="0 0 22 22"><path d="M1.500 2v19" stroke="#da5234" stroke-width="2.300" stroke-linecap="round"/><path d="M.800 2.800c3-1.800 6.500-1.500 9.800-.4s6.200 1.500 9.400.2v12.200c-3.200 1.300-6.200.9-9.400-.2s-6.800-1.400-9.800.4z" fill="#da5234"/></svg>
<div class="t" style="left:843.30px;top:140px;font-size:22.6px;color:#242424;;letter-spacing:0.687px">Stored properties</div>
<svg class="ic" style="left:2386px;top:148px" width="16" height="27" viewBox="0 0 16 27" fill="none" stroke="#737373" stroke-width="2" stroke-linecap="round" stroke-linejoin="round" ><path d="M13.500 3.500L3.200 13.600l10.300 10.200"/></svg>
<svg class="ic" style="left:2413.6px;top:150.3px" width="20.8" height="20.8" viewBox="0 0 24 24"><path d="M12 .600c1 0 1.800.500 2.400 1.500l9.100 16.400c1 1.900-.2 4-2.300 4H2.800c-2.100 0-3.300-2.100-2.300-4L9.600 2.100C10.200 1.100 11 .600 12 .600z" fill="#f5b91c"/><path d="M12 7.200v7" stroke="#fff" stroke-width="3.300" stroke-linecap="round"/><circle cx="12" cy="18.800" r="1.900" fill="#fff"/></svg>
<svg class="ic" style="left:2445px;top:148px" width="16" height="27" viewBox="0 0 16 27" fill="none" stroke="#737373" stroke-width="2" stroke-linecap="round" stroke-linejoin="round" ><path d="M2.500 3.500l10.300 10.100L2.500 23.800"/></svg>
<div class="hline" style="left:0;top:188px;width:2478px"></div>
<div class="abs" style="left:0;top:1832px;width:2478px;height:56px;background:#fff;border-top:2px solid #e3e3e3"></div>
<svg class="ic" style="left:23px;top:1852px" width="30" height="18" viewBox="0 0 30 18"><path d="M3 0h19c1.200 0 2 .4 2.700 1.300l4.700 6c.7.900.7 1.500 0 2.400l-4.700 6c-.7.900-1.500 1.300-2.700 1.300H3c-1.800 0-3-1.200-3-3V3c0-1.800 1.200-3 3-3z" fill="#3478f6"/></svg>
<div class="abs" style="left:68px;top:1849px;width:2px;height:24px;background:#e2e2e2"></div>
<svg class="ic" style="left:90px;top:1847px" width="20" height="28" viewBox="0 0 20 28" fill="none" stroke="#6f6f6f" stroke-width="1.6" stroke-linecap="round" stroke-linejoin="round" ><rect x="2" y="1.900" width="3.800" height="23.800" rx="1.700"/><rect x="14" y="1.900" width="3.800" height="23.800" rx="1.700"/></svg>
<svg class="ic" style="left:146px;top:1850px" width="28" height="25" viewBox="0 0 28 25" fill="none" stroke="#c2c2c2" stroke-width="1.6" stroke-linecap="round" stroke-linejoin="round" stroke-linecap="butt"><path d="M2 14.800L13.800 3 25.500 14.800h-6.300M25.500 14.800V8.600" stroke-linejoin="miter"/><rect x="6.500" y="18.800" width="16.300" height="4" stroke-linejoin="miter"/></svg>
<svg class="ic" style="left:210px;top:1847px" width="20" height="28" viewBox="0 0 20 28" fill="none" stroke="#c2c2c2" stroke-width="1.6" stroke-linecap="round" stroke-linejoin="round" stroke-linecap="butt"><path d="M9.900 1.500v15.500M3 10.800l6.900 6.700 6.900-6.700"/><rect x="1.800" y="21.600" width="16.300" height="4" stroke-linejoin="miter"/></svg>
<svg class="ic" style="left:270px;top:1847px" width="20" height="28" viewBox="0 0 20 28" fill="none" stroke="#c2c2c2" stroke-width="1.6" stroke-linecap="round" stroke-linejoin="round" stroke-linecap="butt"><path d="M9.900 17.500V2M3 8.400l6.900-6.700 6.900 6.700"/><rect x="1.800" y="21.600" width="16.300" height="4" stroke-linejoin="miter"/></svg>
<div class="abs" style="left:310.3px;top:1849px;width:2px;height:24px;background:#e2e2e2"></div>
<svg class="ic" style="left:330px;top:1847px" width="24" height="29" viewBox="0 0 24 29" fill="none" stroke="#737373" stroke-width="1.9" stroke-linecap="round" stroke-linejoin="round" ><path d="M9.500 9.300L22 4.300v16.500L9.500 26.500z"/><path d="M5.500 7.200l11-4.700M5.500 7.200v15l3.500 3M1.800 5.200L12.500.800M1.800 5.200v14.300l3.200 2.700" stroke-width="1.600"/></svg>
<svg class="ic" style="left:388px;top:1847px" width="28" height="28" viewBox="0 0 28 28" fill="none" stroke="#737373" stroke-width="1.8" stroke-linecap="round" stroke-linejoin="round" ><circle cx="6.400" cy="6.300" r="3.600"/><circle cx="6.400" cy="22" r="3.600"/><circle cx="22.300" cy="14" r="3.600"/><path d="M9.700 8l9.300 4.500M9.700 20.300L19 15.600"/></svg>
<svg class="ic" style="left:450px;top:1847px" width="24" height="28" viewBox="0 0 24 28" fill="none" stroke="#737373" stroke-width="1.8" stroke-linecap="round" stroke-linejoin="round" ><rect x="2" y="2.200" width="20" height="9.200" rx="4.600"/><rect x="2" y="16.600" width="20" height="9.200" rx="4.600"/><circle cx="6.900" cy="6.800" r="2.500" fill="#737373" stroke="none"/><circle cx="17.300" cy="21.200" r="2.500" fill="#737373" stroke="none"/></svg>
<svg class="ic" style="left:508px;top:1846px" width="29" height="29" viewBox="0 0 29 29" fill="none" stroke="#737373" stroke-width="1.9" stroke-linecap="round" stroke-linejoin="round" ><path d="M26.500 3L2.800 12.300l11.500 2.600 2.300 11.600z"/></svg>
<div class="abs" style="left:551.6px;top:1849px;width:2px;height:24px;background:#e2e2e2"></div>
<svg class="ic" style="left:572.1px;top:1848.8px" width="23" height="23" viewBox="0 0 24 24"><rect x="0" y="0" width="24" height="24" rx="4.800" fill="#808080"/><g stroke="#fff" stroke-width="2" stroke-linecap="round" fill="none"><path d="M13.100 5.800L10.300 10.800M8.600 13.800L6.700 17.300"/><path d="M10.700 5.800l6.800 11.700"/><path d="M5 14.500h8.200M16.600 14.500h2.600"/></g></svg>
<div class="t" style="left:608.60px;top:1840px;font-size:22.6px;color:#242424;;letter-spacing:0.605px">TodoList</div>
<div class="t" style="right:88.00px;top:1840px;font-size:22.6px;color:#808080;;letter-spacing:0.674px">Line: 13  Col: 17</div>
<div class="abs" style="left:2407.7px;top:1849px;width:2px;height:24px;background:#e2e2e2"></div>
<svg class="ic" style="left:2426px;top:1847px" width="28" height="28" viewBox="0 0 28 28" fill="none" stroke="#737373" stroke-width="2.1" stroke-linecap="round" stroke-linejoin="round" ><rect x="2.300" y="1.900" width="23.600" height="23.800" rx="5.200"/><rect x="5.100" y="16.900" width="17.900" height="6" rx="2.200" fill="#7d7d7d" stroke="none"/></svg>
</div>
</div>
</body></html>
